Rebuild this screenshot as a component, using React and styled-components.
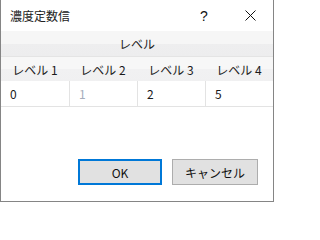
import React from "react";
import styled, { createGlobalStyle } from "styled-components";

const levels = [
  { label: "レベル 1", value: "0" },
  { label: "レベル 2", value: "1", muted: true },
  { label: "レベル 3", value: "2" },
  { label: "レベル 4", value: "5" },
];

const GlobalStyle = createGlobalStyle`
  html, body {
    margin: 0;
    padding: 0;
    background: #fff;
  }
  * {
    box-sizing: border-box;
  }
`;

const App = () => (
  <>
    <GlobalStyle />
    <Window>
      <TitleBar>
        <Title>濃度定数信</Title>
        <TitleButtons>
          <TitleButton>?</TitleButton>
          <TitleButton>
            <svg width="11" height="11" viewBox="0 0 11 11">
              <path d="M0.5 0.5 L10.5 10.5 M10.5 0.5 L0.5 10.5" stroke="#111" strokeWidth="1" />
            </svg>
          </TitleButton>
        </TitleButtons>
      </TitleBar>
      <Grid>
        <GroupHeader>レベル</GroupHeader>
        <HeaderRow>
          {levels.map((l) => (
            <HeaderCell key={l.label}>{l.label}</HeaderCell>
          ))}
        </HeaderRow>
        <DataRow>
          {levels.map((l) => (
            <DataCell key={l.label} $muted={l.muted}>
              {l.value}
            </DataCell>
          ))}
        </DataRow>
      </Grid>
      <Footer>
        <Button $primary>OK</Button>
        <Button>キャンセル</Button>
      </Footer>
    </Window>
  </>
);

const Window = styled.div`
  width: 274px;
  height: 202px;
  background: #fff;
  border: 1px solid #858585;
  border-top: none;
  display: flex;
  flex-direction: column;
  font-family: "Noto Sans CJK JP", "Noto Sans", sans-serif;
  font-size: 12px;
  color: #1a1a1a;
`;

const TitleBar = styled.div`
  height: 31px;
  display: flex;
  align-items: center;
  justify-content: space-between;
  padding-left: 9px;
`;

const Title = styled.div`
  font-size: 12px;
  color: #222;
`;

const TitleButtons = styled.div`
  display: flex;
  height: 100%;
`;

const TitleButton = styled.div`
  width: 46px;
  height: 100%;
  display: flex;
  align-items: center;
  justify-content: center;
  font-family: "Liberation Sans", sans-serif;
  font-size: 14px;
  color: #111;
`;

const Grid = styled.div`
  display: flex;
  flex-direction: column;
`;

const GroupHeader = styled.div`
  height: 26px;
  display: flex;
  align-items: center;
  justify-content: center;
  background: linear-gradient(#f6f6f6 0%, #f6f6f6 52%, #eeeeef 52%, #ededee 100%);
  border-bottom: 1px solid #e4e4e4;
`;

const HeaderRow = styled.div`
  display: grid;
  grid-template-columns: repeat(4, 1fr);
  height: 24px;
  background: linear-gradient(#f7f7f7 0%, #f7f7f7 50%, #f1f1f2 50%, #f0f0f1 100%);
`;

const HeaderCell = styled.div`
  display: flex;
  align-items: center;
  justify-content: center;
`;

const DataRow = styled.div`
  display: grid;
  grid-template-columns: repeat(4, 1fr);
  height: 26px;
  border-bottom: 1px solid #e3e3e3;
`;

const DataCell = styled.div`
  display: flex;
  align-items: center;
  padding-left: 9px;
  border-left: 1px solid #e3e3e3;
  color: ${({ $muted }) => ($muted ? "#a6adbb" : "#1a1a1a")};

  &:first-child {
    border-left: none;
  }
`;

const Footer = styled.div`
  flex: 1;
  display: flex;
  justify-content: flex-end;
  align-items: flex-end;
  gap: 10px;
  padding: 0 15px 16px 0;
`;

const Button = styled.button`
  width: ${({ $primary }) => ($primary ? "84px" : "86px")};
  height: 26px;
  background: #e1e1e1;
  border: ${({ $primary }) => ($primary ? "2px solid #0078d7" : "1px solid #adadad")};
  font-family: "Noto Sans CJK JP", "Noto Sans", sans-serif;
  font-size: 12px;
  color: #111;
  padding: 0;
`;

export default App;
